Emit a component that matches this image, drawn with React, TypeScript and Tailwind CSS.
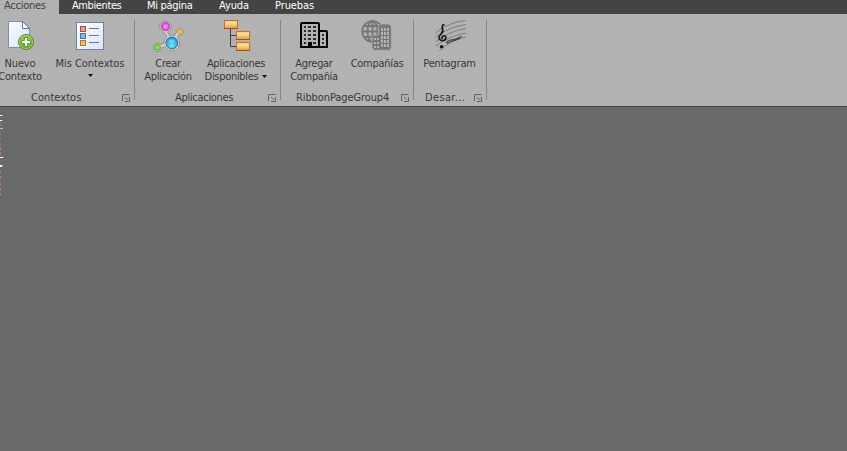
import type { ReactNode } from 'react';

const Icon = ({ children, box = '4 4 32 32' }: { children: ReactNode; box?: string }) => (
  <svg width="32" height="32" viewBox={box} className="block shrink-0">{children}</svg>
);

const NewContextIcon = () => (
  <Icon>
    <defs>
      <linearGradient id="paper" x1="0" y1="0" x2="1" y2="1"><stop offset="0" stopColor="#fff" /><stop offset="1" stopColor="#d3dff2" /></linearGradient>
      <radialGradient id="plus" cx=".5" cy=".35" r=".65"><stop offset="0" stopColor="#a4d94f" /><stop offset="1" stopColor="#5ba321" /></radialGradient>
    </defs>
    <path d="M8.5 5.5H22.5L29.5 12.5V31.5H8.5Z" fill="url(#paper)" stroke="#7c8cba" />
    <path d="M22.5 5.5V12.5H29.5Z" fill="#fff" stroke="#5f73ab" />
    <circle cx="26" cy="26" r="7.5" fill="url(#plus)" stroke="#4f8a24" />
    <circle cx="26" cy="26" r="6.6" fill="none" stroke="#b4dc7c" strokeWidth=".7" />
    <path d="M24.5 21.5h3v3h3v3h-3v3h-3v-3h-3v-3h3z" fill="#fff" stroke="#4b8c1c" strokeWidth=".8" />
  </Icon>
);

const ListIcon = () => (
  <Icon>
    <defs><linearGradient id="sheet" x1="0" y1="0" x2="1" y2="1"><stop stopColor="#fff" /><stop offset="1" stopColor="#dbe5f6" /></linearGradient></defs>
    <rect x="6.5" y="6.5" width="27" height="27" fill="url(#sheet)" stroke="#6c80b4" />
    {[['#b54a3f', '#ec9b8c', 10], ['#3b78b6', '#7fbdea', 17], ['#bd7122', '#f5bd55', 24]].map(([edge, fill, y]) => (
      <g key={y}>
        <rect x="10.5" y={Number(y) + 0.5} width="5" height="5" fill={String(fill)} stroke={String(edge)} />
        <path d={`M19 ${Number(y) + 2.5}H29`} stroke="#6276aa" />
      </g>
    ))}
  </Icon>
);

const MoleculeIcon = () => (
  <Icon>
    <defs>
      <radialGradient id="pink"><stop stopColor="#ff9bff" /><stop offset="1" stopColor="#df35d2" /></radialGradient>
      <radialGradient id="cyan" cy=".7"><stop stopColor="#6bedff" /><stop offset="1" stopColor="#27a9e2" /></radialGradient>
    </defs>
    <g fill="#cfcfcf" stroke="#858585" strokeWidth=".8">
      <path d="M17 15L21 21M30 17L27 22M11 31L19 28" strokeWidth="4" />
      <circle cx="17.5" cy="10.7" r="5.9" /><circle cx="32" cy="15.8" r="3.3" />
      <circle cx="9.5" cy="31.3" r="4.4" /><circle cx="23.8" cy="27" r="8" />
      <path d="M17 15L21 21M30 17L27 22M11 31L19 28" stroke="#cfcfcf" strokeWidth="2.5" />
    </g>
    <circle cx="17.5" cy="10.5" r="4.2" fill="url(#pink)" stroke="#9a3795" strokeWidth=".7" />
    <circle cx="32" cy="15.8" r="2.2" fill="#ffc720" stroke="#b78a16" strokeWidth=".5" />
    <circle cx="9.5" cy="31.3" r="2.9" fill="#83e34a" stroke="#427f25" strokeWidth=".7" />
    <circle cx="23.8" cy="27" r="5.9" fill="url(#cyan)" stroke="#265574" strokeWidth=".8" />
    <path d="M20 25.5q3.5-4.5 7.5 0q-3.5 1.8-7.5 0" fill="#fff" opacity=".3" />
  </Icon>
);

const TreeIcon = () => (
  <Icon box="2 4 32 32">
    <defs><linearGradient id="orange" x2="0" y2="1"><stop stopColor="#f7c276" /><stop offset=".3" stopColor="#ffe09a" /><stop offset="1" stopColor="#e69a37" /></linearGradient></defs>
    <path d="M12.5 12V30.5H19M12.5 19.5H19" fill="none" stroke="#313d5f" />
    {[[6, 4], [18, 15], [18, 26]].map(([x, y]) => (
      <g key={y}><rect x={x + 0.5} y={y + 0.5} width="13" height="8" fill="url(#orange)" stroke="#bf722a" /><path d={`M${x} ${y + 8.5}h14`} stroke="#9e501b" /></g>
    ))}
  </Icon>
);

const BuildingIcon = () => (
  <Icon box="3 4 32 32">
    <path d="M6 31V8q0-1 1-1H23q1 0 1 1V31M24 15h7q1 0 1 1V31M5 31H33" fill="none" stroke="#000" strokeWidth="2" />
    <rect x="13" y="26" width="4" height="5" fill="#000" />
    <path d="M9 11H11M13 11H16M18 11H21M9 15H11M13 15H16M18 15H21M9 19H11M13 19H16M18 19H21M9 23H11M13 23H16M18 23H21M9 27H11M18 27H21M27 19H29M27 23H29M27 27H29" stroke="#000" strokeWidth="1.6" />
  </Icon>
);

const GlobeIcon = () => (
  <Icon box="3 4 32 32">
    <g fill="none" stroke="#777" strokeWidth="1.8">
      <circle cx="14.5" cy="15.5" r="10.3" /><ellipse cx="14.5" cy="15.5" rx="5" ry="10.3" />
      <path d="M14.5 5V26M4 15.5H25M6.5 10H22.5M6.5 21H22" />
    </g>
    <path d="M20.5 19V10.5l2-2.5H31l2.3 2.5V32l-2 2.3H16l-2-2.3V21.5l2-2.5Z" fill="#777" stroke="#b2b2b2" strokeWidth=".8" />
    <g fill="#b2b2b2">
      {[12, 16, 20, 24, 28].map(y => [23, 26, 29].map(x => <rect key={`${x}-${y}`} x={x} y={y} width="2" height="3" />))}
      {[22, 26, 30].map(y => [16, 19].map(x => <rect key={`${x}-${y}`} x={x} y={y} width="2" height="2" />))}
    </g>
  </Icon>
);

const MusicIcon = () => (
  <Icon>
    <g fill="none" stroke="#777" strokeWidth=".9">
      <path d="M5.5 17Q19 6 36 4.5M5.5 21Q19 11 36 8.5M5.5 26Q19 15 36 12.5M5.5 30Q19 20 36 17M9 35Q21 24 36 21" />
    </g>
    <path d="M14.5 9Q12 8 12.2 12Q14 15 11.5 17.5Q8.3 20.5 9.2 23Q12 26 15.3 23.5Q17 20.5 14.2 19.8Q11.7 20.2 12 23M12.2 15L11 19" fill="none" stroke="#181818" strokeWidth="1.6" />
    <circle cx="11.6" cy="30.8" r="1.8" fill="#111" />
    <path d="M16 27Q18 24 22 23.8T29 21.5L32 20.5M17 27.5L20 25.8L24 24.6L30 22.5" fill="none" stroke="#444" strokeWidth="1.1" />
  </Icon>
);

const Arrow = () => <svg width="5" height="3" viewBox="0 0 5 3" className="block"><path d="M0 0H5L2.5 3Z" fill="#111" /></svg>;

const Launcher = () => (
  <svg width="8" height="8" viewBox="0 0 8 8" className="mt-[3px] block shrink-0" fill="none" stroke="#626262">
    <path d="M.5 7V.5H7.5M3 3L6 6M7.5 3V7.5H3" />
  </svg>
);

const Command = ({ icon, lines, className, arrow }: { icon: ReactNode; lines: string[]; className: string; arrow?: 'below' | 'beside' }) => (
  <button className={`flex shrink-0 flex-col items-center whitespace-nowrap ${className}`}>
    {icon}
    <span className="mt-[5px] block leading-[13px]">{lines[0]}</span>
    {lines[1] && <span className="flex items-center leading-[13px]">{lines[1]}{arrow === 'beside' && <span className="ml-1"><Arrow /></span>}</span>}
    {arrow === 'below' && <span className="mt-1"><Arrow /></span>}
  </button>
);

const Group = ({ children, caption, className, captionClass }: { children: ReactNode; caption: string; className: string; captionClass: string }) => (
  <section className={`flex h-[80px] shrink-0 flex-col border-r border-[#858585] ${className}`}>
    <div className="flex h-[71px] shrink-0">{children}</div>
    <div className="flex h-[13px] justify-between pr-1 leading-[13px]"><span className={`whitespace-nowrap ${captionClass}`}>{caption}</span><Launcher /></div>
  </section>
);

export default function App() {
  return (
    <div className="flex h-[451px] w-[847px] flex-col overflow-hidden bg-[#696969] font-['DejaVu_Sans_Condensed','DejaVu_Sans',sans-serif] text-[11px] text-[#373737] [font-stretch:condensed]">
      <nav className="flex h-[14px] shrink-0 bg-[#444] leading-[11px] text-white whitespace-nowrap">
        <span className="w-[59px] bg-[#b2b2b2] pl-1 tracking-[-0.25px] text-[#414141]">Acciones</span>
        <span className="w-[75px] pl-[13px] tracking-[-0.4px]">Ambientes</span>
        <span className="w-[72px] pl-[13px] tracking-[-0.3px]">Mi página</span>
        <span className="w-[57px] pl-[13px] tracking-[-0.1px]">Ayuda</span>
        <span className="pl-[12px] tracking-[-0.1px]">Pruebas</span>
      </nav>
      <header className="flex h-[93px] shrink-0 border-b border-[#444] bg-[#b2b2b2] pt-[6px] tracking-[-0.3px]">
        <Group caption="Contextos" className="w-[135px]" captionClass="ml-[31px] tracking-[0.05px]">
          <Command className="w-[40px] tracking-[-0.15px]" lines={['Nuevo', 'Contexto']} icon={<NewContextIcon />} />
          <Command className="ml-[14px] w-[72px] tracking-[-0.05px]" lines={['Mis Contextos']} arrow="below" icon={<ListIcon />} />
        </Group>
        <Group caption="Aplicaciones" className="w-[146px]" captionClass="ml-[40px]">
          <Command className="ml-[5px] w-[56px]" lines={['Crear', 'Aplicación']} icon={<MoleculeIcon />} />
          <Command className="ml-[5px] w-[70px]" lines={['Aplicaciones', 'Disponibles']} arrow="beside" icon={<TreeIcon />} />
        </Group>
        <Group caption="RibbonPageGroup4" className="w-[133px]" captionClass="ml-[15px] tracking-[-0.1px]">
          <Command className="ml-[5px] w-[56px]" lines={['Agregar', 'Compañía']} icon={<BuildingIcon />} />
          <Command className="ml-[5px] w-[60px]" lines={['Compañías']} icon={<GlobeIcon />} />
        </Group>
        <Group caption="Desar..." className="w-[73px]" captionClass="ml-[11px] tracking-[0.35px]">
          <Command className="ml-[4px] w-[63px] tracking-[-0.15px]" lines={['Pentagram']} icon={<MusicIcon />} />
        </Group>
      </header>
      <main className="min-h-0 flex-1">
        <svg width="4" height="95" viewBox="0 107 4 95" className="block" shapeRendering="crispEdges">
          <path d="M0 115.5H2M0 120.5H2M1 128.5H2M0 157.5H3M0 165.5H2M0 166.5H2" stroke="#fff" />
          <path d="M2 115.5H3M2 120.5H3M0 128.5H1M2 128.5H3M3 157.5H4M2 165.5H3M2 166.5H3" stroke="#c58b70" />
          <path d="M.5 122v1m0 1v2m0 5v1m0 2v1m0 3v2m0 2v1m0 1v1m0 2v3m0 2v3m0 16v3m0 2v3m0 4v2m0 3v3m0 2v3" stroke="#b8795e" />
        </svg>
      </main>
    </div>
  );
}
